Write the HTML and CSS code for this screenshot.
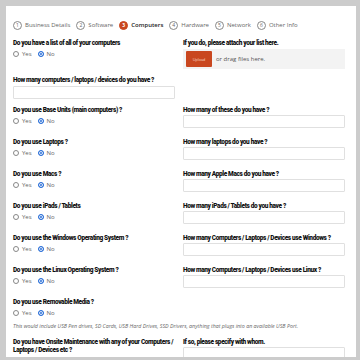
FILE: index.html
```html
<!DOCTYPE html>
<html>
<head>
    <meta charset="UTF-8">
    <meta name="viewport" content="width=device-width, initial-scale=1.0">
    <title>Computers</title>
    <link rel="stylesheet" href="styles.css">
</head>
<body>
    <div class="frame">
        <div class="panel">
            <ul class="steps">
                <li class="step"><span class="num">1</span>Business Details</li>
                <li class="step"><span class="num">2</span>Software</li>
                <li class="step active"><span class="num">3</span>Computers</li>
                <li class="step"><span class="num">4</span>Hardware</li>
                <li class="step"><span class="num">5</span>Network</li>
                <li class="step"><span class="num">6</span>Other Info</li>
            </ul>

            <div class="row first">
                <div class="field">
                    <label class="q">Do you have a list of all of your computers</label>
                    <div class="radios"><span class="radio"></span>Yes<span class="radio on"></span>No</div>
                </div>
                <div class="field">
                    <label class="q">If you do, please attach your list here.</label>
                    <div class="upload"><button class="upload-btn">Upload</button><span>or drag files here.</span></div>
                </div>
            </div>

            <div class="row second">
                <div class="field">
                    <label class="q">How many computers / laptops / devices do you have ?</label>
                    <input type="text" class="box">
                </div>
                <div class="field"></div>
            </div>

            <div class="row">
                <div class="field">
                    <label class="q">Do you use Base Units (main computers) ?</label>
                    <div class="radios"><span class="radio"></span>Yes<span class="radio on"></span>No</div>
                </div>
                <div class="field">
                    <label class="q">How many of these do you have ?</label>
                    <input type="text" class="box">
                </div>
            </div>

            <div class="row">
                <div class="field">
                    <label class="q">Do you use Laptops ?</label>
                    <div class="radios"><span class="radio"></span>Yes<span class="radio on"></span>No</div>
                </div>
                <div class="field">
                    <label class="q">How many laptops do you have ?</label>
                    <input type="text" class="box">
                </div>
            </div>

            <div class="row">
                <div class="field">
                    <label class="q">Do you use Macs ?</label>
                    <div class="radios"><span class="radio"></span>Yes<span class="radio on"></span>No</div>
                </div>
                <div class="field">
                    <label class="q">How many Apple Macs do you have ?</label>
                    <input type="text" class="box">
                </div>
            </div>

            <div class="row">
                <div class="field">
                    <label class="q">Do you use iPads / Tablets</label>
                    <div class="radios"><span class="radio"></span>Yes<span class="radio on"></span>No</div>
                </div>
                <div class="field">
                    <label class="q">How many iPads / Tablets do you have ?</label>
                    <input type="text" class="box">
                </div>
            </div>

            <div class="row">
                <div class="field">
                    <label class="q">Do you use the Windows Operating System ?</label>
                    <div class="radios"><span class="radio"></span>Yes<span class="radio on"></span>No</div>
                </div>
                <div class="field">
                    <label class="q">How many Computers / Laptops / Devices use Windows ?</label>
                    <input type="text" class="box">
                </div>
            </div>

            <div class="row">
                <div class="field">
                    <label class="q">Do you use the Linux Operating System ?</label>
                    <div class="radios"><span class="radio"></span>Yes<span class="radio on"></span>No</div>
                </div>
                <div class="field">
                    <label class="q">How many Computers / Laptops / Devices use Linux ?</label>
                    <input type="text" class="box">
                </div>
            </div>

            <div class="row single">
                <div class="field">
                    <label class="q">Do you use Removable Media ?</label>
                    <div class="radios"><span class="radio"></span>Yes<span class="radio on"></span>No</div>
                </div>
            </div>
            <p class="note">This would include USB Pen drives, SD Cards, USB Hard Drives, SSD Drivers, anything that plugs into an available USB Port.</p>

            <div class="row last">
                <div class="field">
                    <label class="q wrap">Do you have Onsite Maintenance with any of your Computers / Laptops / Devices etc ?</label>
                    <div class="radios"><span class="radio"></span>Yes<span class="radio on"></span>No</div>
                </div>
                <div class="field">
                    <label class="q">If so, please specify with whom.</label>
                    <input type="text" class="box">
                </div>
            </div>
        </div>
    </div>
</body>
</html>
```

FILE: styles.css
```css
body {
    margin: 0;
    background-color: #cccccc;
    font-family: Roboto, Arial, sans-serif;
}
.frame {
    padding: 6px 4px 3px 6px;
    height: 351px;
}
.panel {
    background-color: #ffffff;
    height: 351px;
    overflow: hidden;
    padding: 0 11px 0 7px;
}

/* barra de etapas */
.steps {
    list-style: none;
    margin: 0;
    padding: 14px 0 0 0;
    display: flex;
    gap: 6px;
    font-family: "Open Sans", sans-serif;
    font-size: 6px;
    color: #666666;
    height: 14px;
}
.step {
    display: flex;
    align-items: center;
    height: 10px;
    white-space: nowrap;
}
.num {
    width: 7px;
    height: 7px;
    border: 1px solid #888888;
    border-radius: 50%;
    font-size: 5px;
    line-height: 7px;
    text-align: center;
    margin-right: 3px;
}
.step.active {
    color: #222222;
    font-weight: 600;
}
.step.active .num {
    background-color: #c9471f;
    border-color: #c9471f;
    color: #ffffff;
    font-weight: bold;
}

/* linhas do formulário */
.row {
    display: grid;
    grid-template-columns: 162px 162px;
    column-gap: 8px;
    margin-bottom: 10px;
}
.row.first {
    margin-top: 5px;
    margin-bottom: 7px;
}
.row.second {
    margin-bottom: 7px;
}
.field {
    display: flex;
    flex-direction: column;
}
.q {
    font-weight: 900;
    font-size: 6.5px;
    letter-spacing: -0.38px;
    line-height: 8px;
    color: #111111;
    white-space: nowrap;
}
.q.wrap {
    white-space: normal;
    width: 168px;
}
.radios {
    margin-top: 3px;
    height: 8px;
    display: flex;
    align-items: center;
    font-family: "Open Sans", sans-serif;
    font-size: 6px;
    color: #666666;
}
.radio {
    width: 4px;
    height: 4px;
    border: 1px solid #888888;
    border-radius: 50%;
    margin-right: 3px;
}
.radio.on {
    border-color: #2a6fd8;
    background-color: #2a6fd8;
    box-shadow: inset 0 0 0 1px #ffffff;
    margin-left: 6px;
}
.box {
    margin: 1px 0 0 0;
    height: 13px;
    box-sizing: border-box;
    border: 1px solid #e0e0e0;
    border-radius: 1px;
    padding: 0;
}
.second .box {
    margin-top: 2px;
}
.upload {
    margin-top: 2px;
    height: 20px;
    background-color: #f3f3f3;
    display: flex;
    align-items: center;
    padding-left: 3px;
    font-family: "Open Sans", sans-serif;
    font-size: 6px;
    color: #555555;
}
.upload-btn {
    width: 26px;
    height: 16px;
    background-color: #c9471f;
    border: none;
    border-radius: 1px;
    color: #f4c9b8;
    font-size: 4px;
    padding: 0;
    margin-right: 4px;
}
.row.single {
    margin-bottom: 5px;
}
.note {
    margin: 2px 0 8px 0;
    font-family: "Open Sans", sans-serif;
    font-style: italic;
    font-size: 5.3px;
    color: #666666;
}
```
